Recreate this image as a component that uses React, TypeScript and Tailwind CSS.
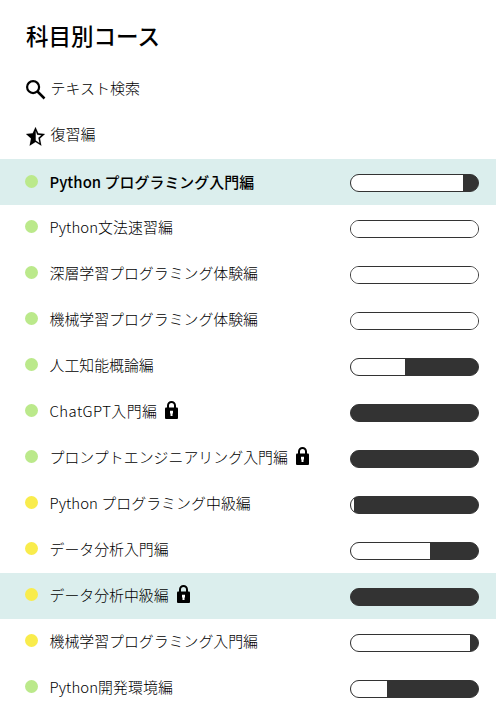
type Course = {
  name: string;
  level: 'green' | 'yellow';
  remaining: number;
  locked?: boolean;
  highlighted?: boolean;
  current?: boolean;
  tracking?: string;
};

const courses: Course[] = [
  { name: 'Python プログラミング入門編', level: 'green', remaining: 112, highlighted: true, current: true, tracking: 'tracking-[0.06px]' },
  { name: 'Python文法速習編', level: 'green', remaining: 127, tracking: 'tracking-[0.08px]' },
  { name: '深層学習プログラミング体験編', level: 'green', remaining: 127 },
  { name: '機械学習プログラミング体験編', level: 'green', remaining: 127 },
  { name: '人工知能概論編', level: 'green', remaining: 54 },
  { name: 'ChatGPT入門編', level: 'green', remaining: 0, locked: true, tracking: 'tracking-[0.45px]' },
  { name: 'プロンプトエンジニアリング入門編', level: 'green', remaining: 0, locked: true, tracking: 'tracking-[0.04px]' },
  { name: 'Python プログラミング中級編', level: 'yellow', remaining: 3, tracking: 'tracking-[0.06px]' },
  { name: 'データ分析入門編', level: 'yellow', remaining: 79 },
  { name: 'データ分析中級編', level: 'yellow', remaining: 0, locked: true, highlighted: true },
  { name: '機械学習プログラミング入門編', level: 'yellow', remaining: 119 },
  { name: 'Python開発環境編', level: 'green', remaining: 36, tracking: 'tracking-[0.08px]' },
];

function SearchIcon() {
  return (
    <svg className="mt-0.5 h-5 w-5 shrink-0" viewBox="0 0 20 20" fill="none" stroke="#000" strokeWidth="2.2">
      <circle cx="7.1" cy="7.1" r="6" />
      <path d="M11.5 11.5l7 7" strokeWidth="2.5" />
    </svg>
  );
}

function HalfStarIcon() {
  return (
    <svg className="mt-[3px] h-5 w-5 shrink-0" viewBox="0 0 20 20">
      <path
        d="M9.5 0l2.8 6.2 6.7.7-5 4.6 1.4 7.2-5.9-3.6-5.9 3.6L5 11.5 0 6.9l6.7-.7zM9.7 3.8v9.7l3.7 2.4-1-5.1 3-2.6-4.2-.4z"
        fill="#000"
        fillRule="evenodd"
        stroke="#000"
        strokeWidth=".1"
        strokeLinejoin="round"
      />
    </svg>
  );
}

function LockIcon() {
  return (
    <svg className="-mt-0.5 ml-2 h-[18px] w-[13px] shrink-0" viewBox="0 0 13 18">
      <path d="M3 8V4.5a3.5 3.5 0 0 1 7 0V8" fill="none" stroke="#000" strokeWidth="2" />
      <rect y="6.5" width="13" height="11.5" rx="1" fill="#000" />
      <path d="M5 9.8h3v2.7h-.5v2.4h-2v-2.4H5z" fill="#fff" />
    </svg>
  );
}

function CourseRow({ course }: { course: Course }) {
  return (
    <li className={`flex h-[46px] items-start pr-[17px] pl-[25px] ${course.highlighted ? 'bg-[#dbeeed]' : ''}`}>
      <div className={`flex h-[13px] flex-1 items-center ${course.current ? 'mt-4' : 'mt-[15px]'}`}>
        <span className={`h-[13px] w-[13px] rounded-full ${course.level === 'green' ? 'bg-[#bbe98b]' : 'bg-[#f9ec4c]'}`} />
        <span
          className={`ml-[11.5px] text-[14.9px] leading-5 whitespace-pre ${course.current ? 'font-medium' : 'font-light'} ${course.tracking ?? ''}`}
        >
          {course.name}
        </span>
        {course.locked && <LockIcon />}
      </div>
      <div className="mt-[15px] h-[18px] w-[129px] overflow-hidden rounded-full border border-[#333] bg-[#333]">
        <div className="h-full bg-white" style={{ width: course.remaining }} />
      </div>
    </li>
  );
}

export default function App() {
  return (
    <main className="h-[701px] w-[496px] overflow-hidden bg-white font-['Noto_Sans_CJK_JP',sans-serif] text-black">
      <h1 className="h-[78px] pt-[19px] pl-[26px] text-[22.5px] leading-8 font-medium">科目別コース</h1>
      <div className="flex h-[46px] items-start pl-[26px]">
        <SearchIcon />
        <span className="ml-[4.5px] text-[15px] leading-5 font-light">テキスト検索</span>
      </div>
      <div className="flex h-[35px] items-start pl-[26px]">
        <HalfStarIcon />
        <span className="ml-[4.5px] text-[15px] leading-5 font-light">復習編</span>
      </div>
      <ul>
        {courses.map((course) => (
          <CourseRow key={course.name} course={course} />
        ))}
      </ul>
    </main>
  );
}
